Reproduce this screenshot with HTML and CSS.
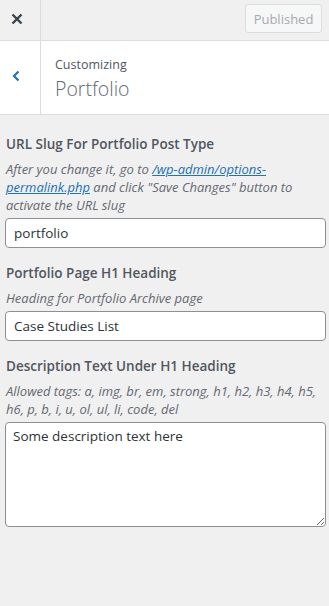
FILE: index.html
```html
<!DOCTYPE html>
<html lang="en">
<head>
    <meta charset="UTF-8">
    <meta name="viewport" content="width=device-width, initial-scale=1.0">
    <title>Customizing Portfolio</title>
    <link rel="stylesheet" href="styles.css">
</head>
<body>
    <div class="panel">
        <!-- barra superior -->
        <div class="topbar">
            <div class="close">
                <svg width="12" height="12" viewBox="0 0 12 12">
                    <path d="M1.5 1.5 L10.5 10.5 M10.5 1.5 L1.5 10.5" stroke="#3c434a" stroke-width="2.4" fill="none"/>
                </svg>
            </div>
            <button class="published">Published</button>
        </div>

        <!-- cabecera de seccion -->
        <div class="section-head">
            <div class="back">
                <svg width="10" height="12" viewBox="0 0 10 12">
                    <path d="M7.5 1.5 L3 6 L7.5 10.5" stroke="#2271b1" stroke-width="2.2" fill="none"/>
                </svg>
            </div>
            <div class="section-title">
                <span class="small">Customizing</span>
                <span class="big">Portfolio</span>
            </div>
        </div>

        <!-- controles -->
        <div class="controls">
            <div class="control">
                <span class="title">URL Slug For Portfolio Post Type</span>
                <span class="desc">After you change it, go to <a href="#">/wp-admin/options-permalink.php</a> and click "Save Changes" button to activate the URL slug</span>
                <input type="text" value="portfolio">
            </div>
            <div class="control">
                <span class="title">Portfolio Page H1 Heading</span>
                <span class="desc">Heading for Portfolio Archive page</span>
                <input type="text" value="Case Studies List">
            </div>
            <div class="control">
                <span class="title">Description Text Under H1 Heading</span>
                <span class="desc">Allowed tags: a, img, br, em, strong, h1, h2, h3, h4, h5, h6, p, b, i, u, ol, ul, li, code, del</span>
                <textarea>Some description text here</textarea>
            </div>
        </div>
    </div>
</body>
</html>
```

FILE: styles.css
```css
* {
    margin: 0px;
    padding: 0px;
    box-sizing: border-box;
}
html, body {
    height: 100%;
}
body {
    background-color: #f0f0f1;
    font-family: "Open Sans", "Noto Sans", sans-serif;
    color: #50575e;
}
.panel {
    display: flex;
    flex-direction: column;
    height: 100%;
}

.topbar {
    display: flex;
    justify-content: space-between;
    align-items: center;
    height: 41px;
    border-bottom: 1px solid #dcdcde;
    padding-right: 7px;
}
.topbar .close {
    width: 41px;
    height: 40px;
    border-right: 1px solid #dcdcde;
    display: flex;
    align-items: center;
    padding-left: 11px;
    padding-bottom: 3px;
}
.published {
    width: 77px;
    height: 29px;
    margin-bottom: 3px;
    border: 1px solid #dcdcde;
    border-radius: 3px;
    background-color: #f6f7f7;
    color: #a7aaad;
    font-family: inherit;
    font-size: 13px;
}

.section-head {
    display: flex;
    height: 74px;
    background-color: white;
    border-bottom: 1px solid #dcdcde;
}
.section-head .back {
    width: 41px;
    border-right: 1px solid #dcdcde;
    display: flex;
    align-items: center;
    padding-left: 11px;
    padding-bottom: 3px;
}
.section-title {
    display: flex;
    flex-direction: column;
    padding-left: 14px;
    padding-top: 15px;
}
.section-title .small {
    font-size: 12.5px;
    line-height: 18px;
}
.section-title .big {
    font-size: 19.5px;
    font-weight: 300;
    line-height: 28px;
    margin-top: 1px;
    color: #646970;
}

.controls {
    padding: 19px 3px 0px 5px;
}
.control {
    display: flex;
    flex-direction: column;
    margin-bottom: 15px;
}
.control .title {
    font-size: 13.5px;
    font-weight: 600;
    line-height: 20px;
    padding-left: 1px;
    margin-bottom: 6px;
}
.control .desc {
    font-size: 13px;
    font-style: italic;
    line-height: 18px;
    color: #646970;
    padding-left: 1px;
    margin-bottom: 4px;
}
.control .desc a {
    color: #2271b1;
}
.control input, .control textarea {
    width: 100%;
    border: 1px solid #8c8f94;
    border-radius: 4px;
    background-color: white;
    font-family: inherit;
    font-size: 13.5px;
    color: #2c3338;
    padding: 0px 8px;
}
.control input {
    height: 30px;
}
.control textarea {
    height: 105px;
    padding: 3px 7px;
    line-height: 20px;
    resize: vertical;
}
```
